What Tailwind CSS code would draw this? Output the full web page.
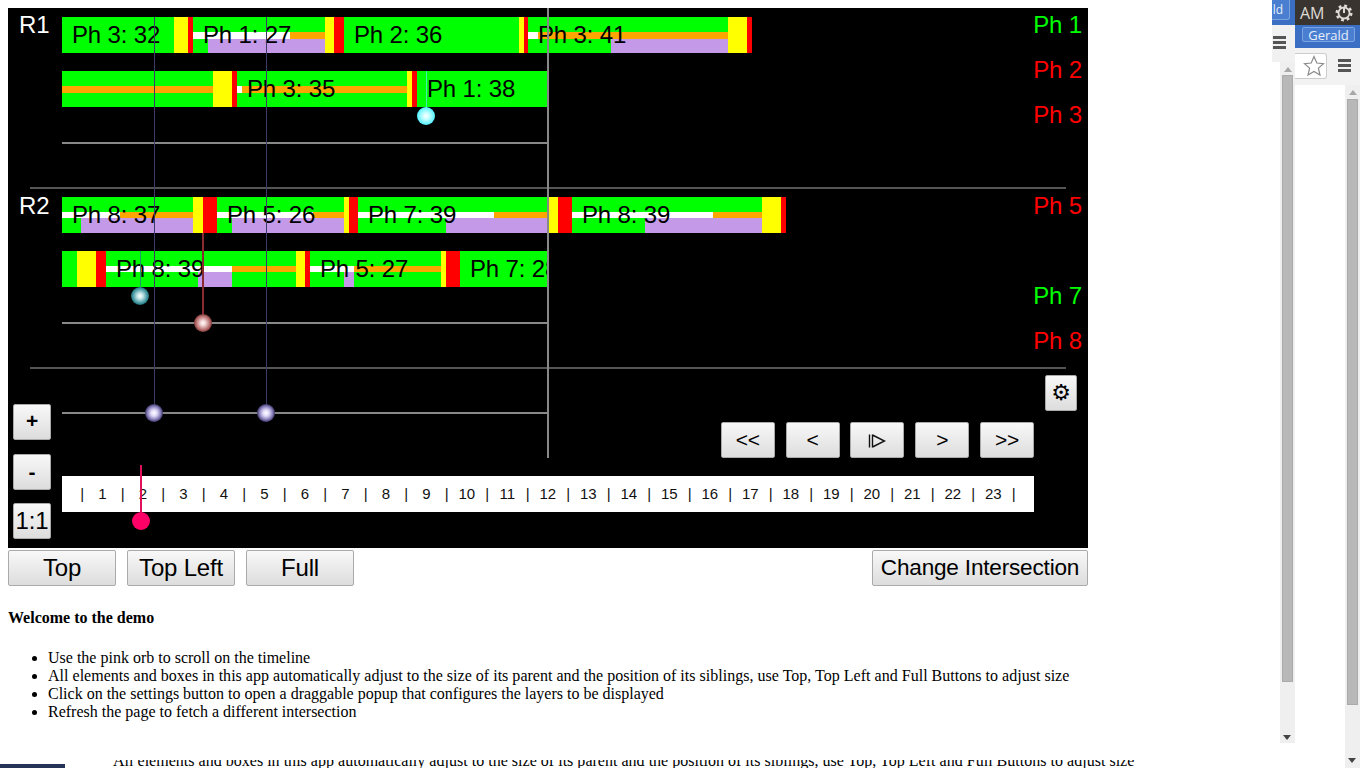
<!DOCTYPE html>
<html lang="en">
<head>
    <meta charset="UTF-8">
    <title>Timeline demo</title>
    <script src="https://cdn.jsdelivr.net/npm/@tailwindcss/browser@4"></script>
</head>
<body class="bg-white text-black font-['Liberation_Serif',serif] text-[16px] leading-[18px]">
<div class="flex w-[1360px] h-[768px] overflow-hidden">

    <!-- page content -->
    <main class="w-[1272px] shrink-0 pt-2 pl-2">

        <!-- timeline panel -->
        <div class="relative w-[1080px] h-[540px] bg-black font-['Liberation_Sans',sans-serif] text-[24px] tracking-[-0.15px]">

            <!-- R1 -->
            <section class="flex h-[179px]">
                <div class="w-[54px] pl-[11px] text-white leading-[34px]">R1</div>
                <div class="w-[972px] pt-[9px]">
                    <div class="flex h-9 leading-[36px]">
                        <div class="relative w-[112px] bg-[#00ff00]"><span class="absolute left-[10px]">Ph 3: 32</span></div>
                        <div class="w-[14px] bg-[#ffff00]"></div><div class="w-[5px] bg-[#ff0000]"></div>
                        <div class="relative w-[132px] bg-[#00ff00]">
                            <div class="absolute top-[15px] left-0 right-0 h-[7px] flex"><div class="w-[97px] bg-white"></div><div class="flex-1 bg-[#ffa500]"></div></div>
                            <div class="absolute top-[22px] bottom-0 right-0 w-[117px] bg-[#c49ae8]"></div>
                            <span class="absolute left-[10px]">Ph 1: 27</span>
                        </div>
                        <div class="w-[9px] bg-[#ffff00]"></div><div class="w-[10px] bg-[#ff0000]"></div>
                        <div class="relative w-[175px] bg-[#00ff00]"><span class="absolute left-[10px]">Ph 2: 36</span></div>
                        <div class="w-[5px] bg-[#ffff00]"></div><div class="w-[4px] bg-[#ff0000]"></div>
                        <div class="relative w-[200px] bg-[#00ff00]">
                            <div class="absolute top-[15px] left-0 right-0 h-[7px] flex"><div class="w-[10px] bg-white"></div><div class="flex-1 bg-[#ffa500]"></div></div>
                            <div class="absolute top-[22px] bottom-0 right-0 w-[117px] bg-[#c49ae8]"></div>
                            <span class="absolute left-[10px]">Ph 3: 41</span>
                        </div>
                        <div class="w-[19px] bg-[#ffff00]"></div><div class="w-[5px] bg-[#ff0000]"></div>
                    </div>
                    <div class="flex w-[486px] h-9 mt-[18px] leading-[36px] overflow-hidden">
                        <div class="relative w-[151px] bg-[#00ff00]">
                            <div class="absolute top-[15px] left-0 right-0 h-[7px] bg-[#ffa500]"></div>
                        </div>
                        <div class="w-[19px] bg-[#ffff00]"></div><div class="w-[5px] bg-[#ff0000]"></div>
                        <div class="relative w-[170px] bg-[#00ff00]">
                            <div class="absolute top-[15px] left-0 right-0 h-[7px] flex"><div class="w-[5px] bg-white"></div><div class="flex-1 bg-[#ffa500]"></div></div>
                            <span class="absolute left-[10px]">Ph 3: 35</span>
                        </div>
                        <div class="w-[5px] bg-[#ffff00]"></div><div class="w-[5px] bg-[#ff0000]"></div>
                        <div class="relative w-[131px] bg-[#00ff00]"><span class="absolute left-[10px]">Ph 1: 38</span></div>
                    </div>
                    <div class="w-[486px] h-[2px] mt-[35px] bg-[#888888]"></div>
                </div>
                <div class="flex-1 flex flex-col items-end gap-[11px] pr-[6px] leading-[34px] whitespace-nowrap">
                    <div class="text-[#00ff00]">Ph 1</div>
                    <div class="text-[#ff0000]">Ph 2</div>
                    <div class="text-[#ff0000]">Ph 3</div>
                </div>
            </section>

            <div class="h-[2px] mx-[22px] bg-[#555555]"></div>

            <!-- R2 -->
            <section class="flex h-[178px]">
                <div class="w-[54px] pl-[11px] text-white leading-[34px]">R2</div>
                <div class="w-[972px] pt-2">
                    <div class="flex h-9 leading-[36px]">
                        <div class="relative w-[131px] bg-[#00ff00]">
                            <div class="absolute top-[15px] left-0 right-0 h-[6px] flex"><div class="w-[58px] bg-white"></div><div class="flex-1 bg-[#ffa500]"></div></div>
                            <div class="absolute top-[21px] bottom-0 right-0 w-[112px] bg-[#c49ae8]"></div>
                            <span class="absolute left-[10px]">Ph 8: 37</span>
                        </div>
                        <div class="w-[10px] bg-[#ffff00]"></div><div class="w-[14px] bg-[#ff0000]"></div>
                        <div class="relative w-[127px] bg-[#00ff00]">
                            <div class="absolute top-[15px] left-0 right-0 h-[6px] flex"><div class="w-[96px] bg-white"></div><div class="flex-1 bg-[#ffa500]"></div></div>
                            <div class="absolute top-[21px] bottom-0 right-0 w-[112px] bg-[#c49ae8]"></div>
                            <span class="absolute left-[10px]">Ph 5: 26</span>
                        </div>
                        <div class="w-[5px] bg-[#ffff00]"></div><div class="w-[9px] bg-[#ff0000]"></div>
                        <div class="relative w-[190px] bg-[#00ff00]">
                            <div class="absolute top-[15px] left-0 right-0 h-[6px] flex"><div class="w-[136px] bg-white"></div><div class="flex-1 bg-[#ffa500]"></div></div>
                            <div class="absolute top-[21px] bottom-0 right-0 w-[102px] bg-[#c49ae8]"></div>
                            <span class="absolute left-[10px]">Ph 7: 39</span>
                        </div>
                        <div class="w-[10px] bg-[#ffff00]"></div><div class="w-[14px] bg-[#ff0000]"></div>
                        <div class="relative w-[190px] bg-[#00ff00]">
                            <div class="absolute top-[15px] left-0 right-0 h-[6px] flex"><div class="w-[141px] bg-white"></div><div class="flex-1 bg-[#ffa500]"></div></div>
                            <div class="absolute top-[21px] bottom-0 right-0 w-[117px] bg-[#c49ae8]"></div>
                            <span class="absolute left-[10px]">Ph 8: 39</span>
                        </div>
                        <div class="w-[19px] bg-[#ffff00]"></div><div class="w-[5px] bg-[#ff0000]"></div>
                    </div>
                    <div class="flex w-[486px] h-9 mt-[18px] leading-[36px] overflow-hidden">
                        <div class="w-[15px] bg-[#00ff00]"></div>
                        <div class="w-[19px] bg-[#ffff00]"></div><div class="w-[10px] bg-[#ff0000]"></div>
                        <div class="relative w-[190px] bg-[#00ff00]">
                            <div class="absolute top-[15px] left-0 right-0 h-[6px] flex"><div class="w-[126px] bg-white"></div><div class="flex-1 bg-[#ffa500]"></div></div>
                            <div class="absolute top-[21px] bottom-0 left-[92px] w-[34px] bg-[#c49ae8]"></div>
                            <span class="absolute left-[10px]">Ph 8: 39</span>
                        </div>
                        <div class="w-[9px] bg-[#ffff00]"></div><div class="w-[5px] bg-[#ff0000]"></div>
                        <div class="relative w-[131px] bg-[#00ff00]">
                            <div class="absolute top-[15px] left-0 right-0 h-[6px] flex"><div class="w-[44px] bg-white"></div><div class="flex-1 bg-[#ffa500]"></div></div>
                            <div class="absolute top-[21px] bottom-0 left-[34px] w-[10px] bg-[#c49ae8]"></div>
                            <span class="absolute left-[10px]">Ph 5: 27</span>
                        </div>
                        <div class="w-[5px] bg-[#ffff00]"></div><div class="w-[14px] bg-[#ff0000]"></div>
                        <div class="relative w-[88px] bg-[#00ff00] overflow-hidden"><span class="absolute left-[10px] whitespace-nowrap">Ph 7: 28</span></div>
                    </div>
                    <div class="w-[486px] h-[2px] mt-[35px] bg-[#888888]"></div>
                </div>
                <div class="flex-1 flex flex-col items-end gap-[11px] pr-[6px] leading-[34px] whitespace-nowrap">
                    <div class="text-[#ff0000]">Ph 5</div>
                    <div class="h-[34px]"></div>
                    <div class="text-[#00ff00]">Ph 7</div>
                    <div class="text-[#ff0000]">Ph 8</div>
                </div>
            </section>

            <div class="h-[2px] mx-[22px] bg-[#555555]"></div>

            <!-- controls -->
            <section class="flex h-[179px]">
                <div class="w-[54px] pl-[5px] pt-[35px] flex flex-col">
                    <button class="w-[38px] h-9 pb-[2px] text-[21px] font-bold rounded-[2px] border border-[#aaaaaa] bg-linear-to-b from-[#f8f8f8] to-[#dddddd]">+</button>
                    <button class="w-[38px] h-9 mt-[14px] text-[21px] font-bold rounded-[2px] border border-[#aaaaaa] bg-linear-to-b from-[#f8f8f8] to-[#dddddd]">-</button>
                    <button class="w-[38px] h-9 mt-[13px] rounded-[2px] border border-[#aaaaaa] bg-linear-to-b from-[#f8f8f8] to-[#dddddd]">1:1</button>
                </div>
                <div class="w-[972px] pt-[43px]">
                    <div class="w-[486px] h-[2px] bg-[#888888]"></div>
                    <div class="flex justify-end gap-[10.8px] mt-2 text-[21px]">
                        <button class="w-[54px] h-9 rounded-[2px] border border-[#aaaaaa] bg-linear-to-b from-[#f8f8f8] to-[#dddddd]">&lt;&lt;</button>
                        <button class="w-[54px] h-9 rounded-[2px] border border-[#aaaaaa] bg-linear-to-b from-[#f8f8f8] to-[#dddddd]">&lt;</button>
                        <button class="w-[54px] h-9 flex items-center justify-center rounded-[2px] border border-[#aaaaaa] bg-linear-to-b from-[#f8f8f8] to-[#dddddd]">
                            <svg class="w-[18px] h-[14px] mt-[2px]" viewBox="0 0 18 14" fill="none" stroke="#111111" stroke-width="1.4"><path d="M1.5 0.5V13.5M4.5 0.5V13.5M4.5 1L16.5 7L4.5 13"/></svg>
                        </button>
                        <button class="w-[54px] h-9 rounded-[2px] border border-[#aaaaaa] bg-linear-to-b from-[#f8f8f8] to-[#dddddd]">&gt;</button>
                        <button class="w-[54px] h-9 rounded-[2px] border border-[#aaaaaa] bg-linear-to-b from-[#f8f8f8] to-[#dddddd]">&gt;&gt;</button>
                    </div>
                    <!-- hour ruler -->
                    <div class="flex h-9 mt-[18px] pl-[10px] items-center bg-white text-[15px] tracking-normal text-[#111111]">
                        <div class="flex w-[40.5px] justify-between"><span class="w-[20.25px] text-center">|</span><span class="w-[20.25px] text-center">1</span></div>
                        <div class="flex w-[40.5px] justify-between"><span class="w-[20.25px] text-center">|</span><span class="w-[20.25px] text-center">2</span></div>
                        <div class="flex w-[40.5px] justify-between"><span class="w-[20.25px] text-center">|</span><span class="w-[20.25px] text-center">3</span></div>
                        <div class="flex w-[40.5px] justify-between"><span class="w-[20.25px] text-center">|</span><span class="w-[20.25px] text-center">4</span></div>
                        <div class="flex w-[40.5px] justify-between"><span class="w-[20.25px] text-center">|</span><span class="w-[20.25px] text-center">5</span></div>
                        <div class="flex w-[40.5px] justify-between"><span class="w-[20.25px] text-center">|</span><span class="w-[20.25px] text-center">6</span></div>
                        <div class="flex w-[40.5px] justify-between"><span class="w-[20.25px] text-center">|</span><span class="w-[20.25px] text-center">7</span></div>
                        <div class="flex w-[40.5px] justify-between"><span class="w-[20.25px] text-center">|</span><span class="w-[20.25px] text-center">8</span></div>
                        <div class="flex w-[40.5px] justify-between"><span class="w-[20.25px] text-center">|</span><span class="w-[20.25px] text-center">9</span></div>
                        <div class="flex w-[40.5px] justify-between"><span class="w-[20.25px] text-center">|</span><span class="w-[20.25px] text-center">10</span></div>
                        <div class="flex w-[40.5px] justify-between"><span class="w-[20.25px] text-center">|</span><span class="w-[20.25px] text-center">11</span></div>
                        <div class="flex w-[40.5px] justify-between"><span class="w-[20.25px] text-center">|</span><span class="w-[20.25px] text-center">12</span></div>
                        <div class="flex w-[40.5px] justify-between"><span class="w-[20.25px] text-center">|</span><span class="w-[20.25px] text-center">13</span></div>
                        <div class="flex w-[40.5px] justify-between"><span class="w-[20.25px] text-center">|</span><span class="w-[20.25px] text-center">14</span></div>
                        <div class="flex w-[40.5px] justify-between"><span class="w-[20.25px] text-center">|</span><span class="w-[20.25px] text-center">15</span></div>
                        <div class="flex w-[40.5px] justify-between"><span class="w-[20.25px] text-center">|</span><span class="w-[20.25px] text-center">16</span></div>
                        <div class="flex w-[40.5px] justify-between"><span class="w-[20.25px] text-center">|</span><span class="w-[20.25px] text-center">17</span></div>
                        <div class="flex w-[40.5px] justify-between"><span class="w-[20.25px] text-center">|</span><span class="w-[20.25px] text-center">18</span></div>
                        <div class="flex w-[40.5px] justify-between"><span class="w-[20.25px] text-center">|</span><span class="w-[20.25px] text-center">19</span></div>
                        <div class="flex w-[40.5px] justify-between"><span class="w-[20.25px] text-center">|</span><span class="w-[20.25px] text-center">20</span></div>
                        <div class="flex w-[40.5px] justify-between"><span class="w-[20.25px] text-center">|</span><span class="w-[20.25px] text-center">21</span></div>
                        <div class="flex w-[40.5px] justify-between"><span class="w-[20.25px] text-center">|</span><span class="w-[20.25px] text-center">22</span></div>
                        <div class="flex w-[40.5px] justify-between"><span class="w-[20.25px] text-center">|</span><span class="w-[20.25px] text-center">23</span></div>
                        <span class="w-[20.25px] text-center">|</span>
                    </div>
                </div>
                <div class="pl-[11px] pt-[6px]">
                    <button class="w-8 h-9 flex items-center justify-center text-[22px] font-['DejaVu_Sans',sans-serif] rounded-[2px] border border-[#aaaaaa] bg-linear-to-b from-[#f8f8f8] to-[#dddddd]">⚙</button>
                </div>
            </section>

            <!-- cursors and orbs laid over the timeline -->
            <div class="absolute left-[539px] top-0 w-[2px] h-[450px] bg-[#888888]"></div>
            <div class="absolute left-[146px] top-[9px] w-px h-[396px] bg-[#3c3a66]"></div>
            <div class="absolute left-[258px] top-[9px] w-px h-[396px] bg-[#3c3a66]"></div>
            <div class="absolute left-[194px] top-[225px] w-[2px] h-[90px] bg-[#8a2a30]"></div>
            <div class="absolute left-[132px] top-[243px] w-px h-[45px] bg-[#1f9a6a]"></div>
            <div class="absolute left-[418px] top-[63px] w-px h-[45px] bg-[#40f0b0]"></div>
            <div class="absolute left-[132px] top-[457px] w-[2px] h-[56px] bg-[#e0105a]"></div>

            <div class="absolute left-[409px] top-[99px] w-[18px] h-[18px] rounded-full bg-[radial-gradient(circle_closest-side,#ffffff_0%,#c0ffff_40%,#50f0ff_100%)]"></div>
            <div class="absolute left-[123px] top-[279px] w-[18px] h-[18px] rounded-full bg-[radial-gradient(circle_closest-side,#ffffff_0%,#c8e8e8_30%,#50a0a8_75%,#1c7078_100%)]"></div>
            <div class="absolute left-[186px] top-[306px] w-[18px] h-[18px] rounded-full bg-[radial-gradient(circle_closest-side,#ffffff_0%,#f0d0d0_30%,#b87070_75%,#803838_100%)]"></div>
            <div class="absolute left-[137px] top-[396px] w-[18px] h-[18px] rounded-full bg-[radial-gradient(circle_closest-side,#ffffff_0%,#e0d8f8_35%,#9088c0_70%,#3c3668_100%)]"></div>
            <div class="absolute left-[249px] top-[396px] w-[18px] h-[18px] rounded-full bg-[radial-gradient(circle_closest-side,#ffffff_0%,#e0d8f8_35%,#9088c0_70%,#3c3668_100%)]"></div>
            <div class="absolute left-[124px] top-[504px] w-[18px] h-[18px] rounded-full bg-[#ff0066]"></div>
        </div>

        <!-- size buttons -->
        <div class="flex w-[1080px] gap-[11px] mt-[2px] font-['Liberation_Sans',sans-serif] text-[24px] tracking-[-0.2px]">
            <button class="w-[108px] h-9 rounded-[2px] border border-[#aaaaaa] bg-linear-to-b from-[#f8f8f8] to-[#dddddd]">Top</button>
            <button class="w-[108px] h-9 rounded-[2px] border border-[#aaaaaa] bg-linear-to-b from-[#f8f8f8] to-[#dddddd]">Top Left</button>
            <button class="w-[108px] h-9 rounded-[2px] border border-[#aaaaaa] bg-linear-to-b from-[#f8f8f8] to-[#dddddd]">Full</button>
            <button class="w-[216px] h-9 ml-auto whitespace-nowrap text-[22.6px] rounded-[2px] border border-[#aaaaaa] bg-linear-to-b from-[#f8f8f8] to-[#dddddd]">Change Intersection</button>
        </div>

        <p class="mt-[23px] font-bold">Welcome to the demo</p>
        <ul class="mt-[22px] pl-10 list-disc">
            <li>Use the pink orb to scroll on the timeline</li>
            <li class="tracking-[0.018px]">All elements and boxes in this app automatically adjust to the size of its parent and the position of its siblings, use Top, Top Left and Full Buttons to adjust size</li>
            <li>Click on the settings button to open a draggable popup that configures the layers to be displayed</li>
            <li>Refresh the page to fetch a different intersection</li>
        </ul>

        <!-- next window peeking in at the bottom -->
        <div class="flex h-2 mt-[39px] -ml-2 overflow-hidden">
            <div class="w-[65px] h-1 mt-1 shrink-0 bg-[#263358]"></div>
            <div class="ml-[48px] -mt-2 whitespace-nowrap tracking-[0.018px]">All elements and boxes in this app automatically adjust to the size of its parent and the position of its siblings, use Top, Top Left and Full Buttons to adjust size</div>
        </div>
    </main>

    <!-- window behind: narrow strip -->
    <div class="w-[23px] shrink-0 flex flex-col font-['Open_Sans',sans-serif]">
        <div class="h-[25px] bg-[#3a6fc4] overflow-hidden">
            <div class="flex justify-end items-center w-[18px] h-5 pr-[6px] rounded-br-[3px] border-r border-b border-[#7ba3e0] bg-[#4a7ed0] text-[12px] text-[#e6eefa]">ld</div>
        </div>
        <div class="h-[37px] pt-[11px] pl-px bg-[#f1f1f1]">
            <div class="w-[13px] h-[3px] bg-[#555555]"></div>
            <div class="w-[13px] h-[3px] mt-[2px] bg-[#555555]"></div>
            <div class="w-[13px] h-[3px] mt-[2px] bg-[#555555]"></div>
        </div>
        <div class="relative w-[15px] h-[681px] ml-2 bg-[#efefef]">
            <div class="mx-auto mt-[5px] w-0 h-0 border-x-[4px] border-x-transparent border-b-[5px] border-b-[#a8a8a8]"></div>
            <div class="w-[11px] h-[607px] mx-auto mt-[3px] bg-[#b8b8b8] border border-[#aaaaaa]"></div>
            <div class="absolute left-[3px] bottom-[3px] w-0 h-0 border-x-[4px] border-x-transparent border-t-[5px] border-t-[#444444]"></div>
        </div>
    </div>

    <!-- window behind: right strip -->
    <div class="w-[65px] shrink-0 flex flex-col font-['Open_Sans',sans-serif]">
        <div class="flex items-center h-[25px] pl-[5px] bg-[#3a3430] text-[16px] text-[#dedbd6]">
            <span>AM</span>
            <svg class="w-[18px] h-[18px] ml-auto mr-[7px]" viewBox="0 0 18 18" fill="none" stroke="#dedbd6">
                <circle cx="9" cy="9" r="5.5" stroke-width="1.8"/>
                <circle cx="9" cy="9" r="7.2" stroke-width="2.6" stroke-dasharray="2.8 2.85"/>
                <path d="M9 3V9" stroke-width="2"/>
            </svg>
        </div>
        <div class="h-[23px] pt-[2px] pl-[7px] bg-[#3a6fc4]">
            <div class="w-[53px] h-[15px] leading-[14px] rounded-[2px] border border-[#7ba3e0] bg-[#4a7ed0] text-center text-[13px] text-[#e6eefa]">Gerald</div>
        </div>
        <div class="flex items-center h-[37px] pb-[2px] bg-[#f2f2f2]">
            <div class="flex items-center justify-center w-8 h-[26px] pl-[6px] rounded-r-[3px] border border-l-0 border-[#cccccc] bg-white">
                <svg class="w-[22px] h-[22px]" viewBox="0 0 22 22" fill="none" stroke="#8a8a8a" stroke-width="1.2"><path d="M11 1.5L13.8 8L20.5 8.6L15.4 13.1L17 20L11 16.4L5 20L6.6 13.1L1.5 8.6L8.2 8Z"/></svg>
            </div>
            <div class="ml-[11px]">
                <div class="w-[13px] h-[3px] bg-[#555555]"></div>
                <div class="w-[13px] h-[3px] mt-[2px] bg-[#555555]"></div>
                <div class="w-[13px] h-[3px] mt-[2px] bg-[#555555]"></div>
            </div>
        </div>
        <div class="relative w-[15px] flex-1 ml-[50px] bg-[#efefef]">
            <div class="mx-auto mt-[5px] w-0 h-0 border-x-[4px] border-x-transparent border-b-[5px] border-b-[#a8a8a8]"></div>
            <div class="w-[11px] h-[606px] mx-auto mt-[4px] bg-[#b8b8b8] border border-[#aaaaaa]"></div>
            <div class="absolute left-[3px] bottom-[5px] w-0 h-0 border-x-[4px] border-x-transparent border-t-[5px] border-t-[#444444]"></div>
        </div>
    </div>
</div>
</body>
</html>
